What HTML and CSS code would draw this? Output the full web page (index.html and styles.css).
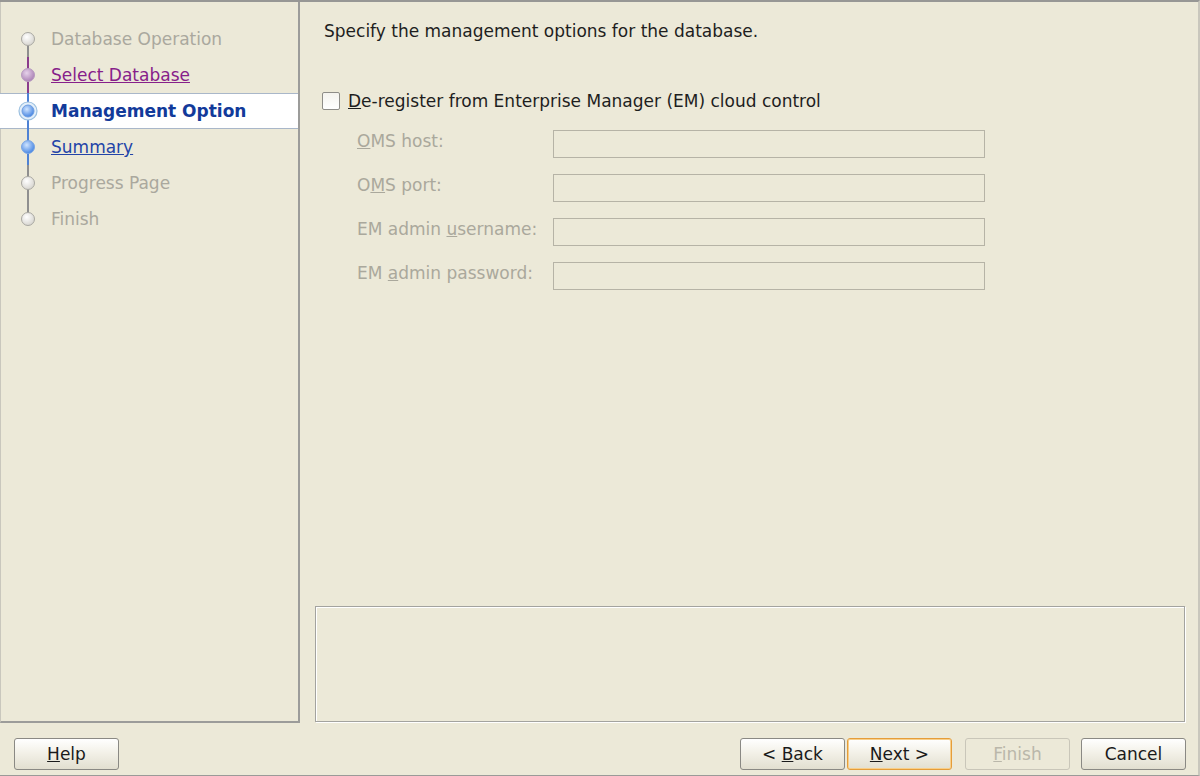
FILE: index.html
```html
<!DOCTYPE html>
<html>
<head>
<meta charset="utf-8">
<link rel="stylesheet" href="styles.css">
</head>
<body>
<div class="window">
  <div class="main">
    <div class="nav">
      <div class="step">
        <svg class="mark" width="51" height="36" viewBox="0 0 51 36">
          <defs>
            <radialGradient id="gw" cx="40%" cy="35%" r="70%"><stop offset="0" stop-color="#ffffff"/><stop offset="1" stop-color="#d4d2cc"/></radialGradient>
            <radialGradient id="gp" cx="40%" cy="35%" r="70%"><stop offset="0" stop-color="#e6d2ea"/><stop offset="1" stop-color="#a77cb2"/></radialGradient>
            <radialGradient id="gb" cx="40%" cy="35%" r="70%"><stop offset="0" stop-color="#cfe4ff"/><stop offset="1" stop-color="#3d7fe0"/></radialGradient>
          </defs>
          <line x1="28" y1="18" x2="28" y2="36" stroke="#8f8f8f" stroke-width="2"/>
          <circle cx="28" cy="18" r="6.5" fill="url(#gw)" stroke="#a9a8a2" stroke-width="1"/>
        </svg>
        <span class="lbl off">Database Operation</span>
      </div>
      <div class="step">
        <svg class="mark" width="51" height="36" viewBox="0 0 51 36">
          <line x1="28" y1="0" x2="28" y2="36" stroke="#8a3c8c" stroke-width="2"/>
          <circle cx="28" cy="18" r="6.5" fill="url(#gp)" stroke="#b79bc0" stroke-width="1"/>
        </svg>
        <span class="lbl visited">Select Database</span>
      </div>
      <div class="step current">
        <svg class="mark" width="51" height="36" viewBox="0 0 51 36">
          <line x1="28" y1="0" x2="28" y2="36" stroke="#4f82d4" stroke-width="2"/>
          <circle cx="28" cy="18" r="9" fill="#e3effa" stroke="#9cc0e0" stroke-width="1.2"/>
          <circle cx="28" cy="18" r="6" fill="url(#gb)" stroke="#6f9ee0" stroke-width="1"/>
        </svg>
        <span class="lbl cur">Management Option</span>
      </div>
      <div class="step">
        <svg class="mark" width="51" height="36" viewBox="0 0 51 36">
          <line x1="28" y1="0" x2="28" y2="36" stroke="#4f82d4" stroke-width="2"/>
          <circle cx="28" cy="18" r="6.5" fill="url(#gb)" stroke="#7aa6e4" stroke-width="1"/>
        </svg>
        <span class="lbl link">Summary</span>
      </div>
      <div class="step">
        <svg class="mark" width="51" height="36" viewBox="0 0 51 36">
          <line x1="28" y1="0" x2="28" y2="36" stroke="#8f8f8f" stroke-width="2"/>
          <circle cx="28" cy="18" r="6.5" fill="url(#gw)" stroke="#a9a8a2" stroke-width="1"/>
        </svg>
        <span class="lbl off">Progress Page</span>
      </div>
      <div class="step">
        <svg class="mark" width="51" height="36" viewBox="0 0 51 36">
          <line x1="28" y1="0" x2="28" y2="18" stroke="#8f8f8f" stroke-width="2"/>
          <circle cx="28" cy="18" r="6.5" fill="url(#gw)" stroke="#a9a8a2" stroke-width="1"/>
        </svg>
        <span class="lbl off">Finish</span>
      </div>
    </div>
    <div class="content">
      <div class="intro">Specify the management options for the database.</div>
      <div class="check-row">
        <span class="checkbox"></span>
        <span class="check-label"><u>D</u>e-register from Enterprise Manager (EM) cloud control</span>
      </div>
      <div class="form">
        <div class="frow"><span class="flabel"><u>O</u>MS host:</span><span class="field"></span></div>
        <div class="frow"><span class="flabel">O<u>M</u>S port:</span><span class="field"></span></div>
        <div class="frow"><span class="flabel">EM admin <u>u</u>sername:</span><span class="field"></span></div>
        <div class="frow"><span class="flabel">EM <u>a</u>dmin password:</span><span class="field"></span></div>
      </div>
      <div class="spacer"></div>
      <div class="msgbox"></div>
    </div>
  </div>
  <div class="footer">
    <button class="btn"><u>H</u>elp</button>
    <div class="grow"></div>
    <button class="btn">&lt; <u>B</u>ack</button>
    <button class="btn focus"><u>N</u>ext &gt;</button>
    <button class="btn disabled"><u>F</u>inish</button>
    <button class="btn cancel">Cancel</button>
  </div>
</div>
</body>
</html>
```
FILE: styles.css
```css
html, body {
  margin: 0;
  padding: 0;
}
body {
  width: 1200px;
  height: 776px;
  background: #ece9d8;
  font-family: "DejaVu Sans", "Liberation Sans", sans-serif;
  font-size: 17px;
  color: #1e1e1e;
  overflow: hidden;
}
.window {
  width: 1200px;
  height: 776px;
  box-sizing: border-box;
  border-top: 2px solid #979795;
  border-right: 2px solid #c9c7bd;
  border-bottom: 1px solid #9a9a98;
  display: flex;
  flex-direction: column;
}
.main {
  display: flex;
  height: 721px;
}
.nav {
  width: 300px;
  box-sizing: border-box;
  border-right: 2px solid #9c9c9a;
  border-bottom: 2px solid #9c9c9a;
  border-left: 1px solid #c9c7bd;
  padding-top: 19px;
}
.step {
  height: 36px;
  display: flex;
  align-items: center;
  margin-left: -1px;
}
.step.current {
  background: #ffffff;
  box-shadow: inset 0 1px 0 #a9b7c9, inset 0 -1px 0 #a9b7c9;
}
.mark {
  display: block;
  flex: none;
}
.lbl {
  white-space: nowrap;
}
.lbl.off {
  color: #aaa89e;
}
.lbl.visited {
  color: #87208a;
  text-decoration: underline;
}
.lbl.cur {
  color: #123a9a;
  font-weight: bold;
}
.lbl.link {
  color: #2344a8;
  text-decoration: underline;
}
.content {
  flex: 1;
  display: flex;
  flex-direction: column;
}
.intro {
  padding: 20px 0 0 24px;
  line-height: 19px;
}
.check-row {
  display: flex;
  align-items: center;
  margin-top: 50px;
  padding-left: 22px;
  height: 20px;
}
.checkbox {
  width: 16px;
  height: 16px;
  border: 1px solid #8e8d88;
  border-radius: 2px;
  background: linear-gradient(#f4f3ee, #ffffff);
  flex: none;
}
.check-label {
  margin-left: 8px;
  line-height: 19px;
}
.form {
  margin-top: 19px;
  padding-left: 57px;
  display: flex;
  flex-direction: column;
  gap: 16px;
}
.frow {
  display: flex;
  align-items: center;
  height: 28px;
}
.flabel {
  width: 196px;
  color: #aaa89c;
  white-space: nowrap;
  position: relative;
  top: -3px;
}
.field {
  width: 430px;
  height: 26px;
  border: 1px solid #b6b3a6;
  background: #ece9d8;
}
.spacer {
  flex: 1;
}
.msgbox {
  height: 114px;
  margin: 0 13px 0 15px;
  border: 1px solid #a3a39f;
  box-shadow: inset 1px 1px 0 #ffffff, 1px 1px 0 #ffffff;
  margin-bottom: 1px;
}
.footer {
  flex: 1;
  display: flex;
  align-items: flex-start;
  padding: 15px 12px 0 14px;
}
.grow {
  flex: 1;
}
.btn {
  font-family: "DejaVu Sans", "Liberation Sans", sans-serif;
  font-size: 17px;
  color: #1a1a1a;
  width: 105px;
  height: 32px;
  padding: 0;
  border: 1px solid #8a8984;
  border-radius: 3px;
  background: linear-gradient(#ffffff, #f3f1e8 45%, #e2dfd0);
  margin-left: 2px;
}
.btn:first-child {
  margin-left: 0;
}
.btn.focus {
  border-color: #e59d3a;
  box-shadow: inset 0 0 0 1px #f8cf8a;
}
.btn.disabled {
  margin-left: 13px;
  color: #bab7aa;
  border-color: #c9c6b9;
  background: #ece9d8;
}
.btn.cancel {
  margin-left: 11px;
}
```
